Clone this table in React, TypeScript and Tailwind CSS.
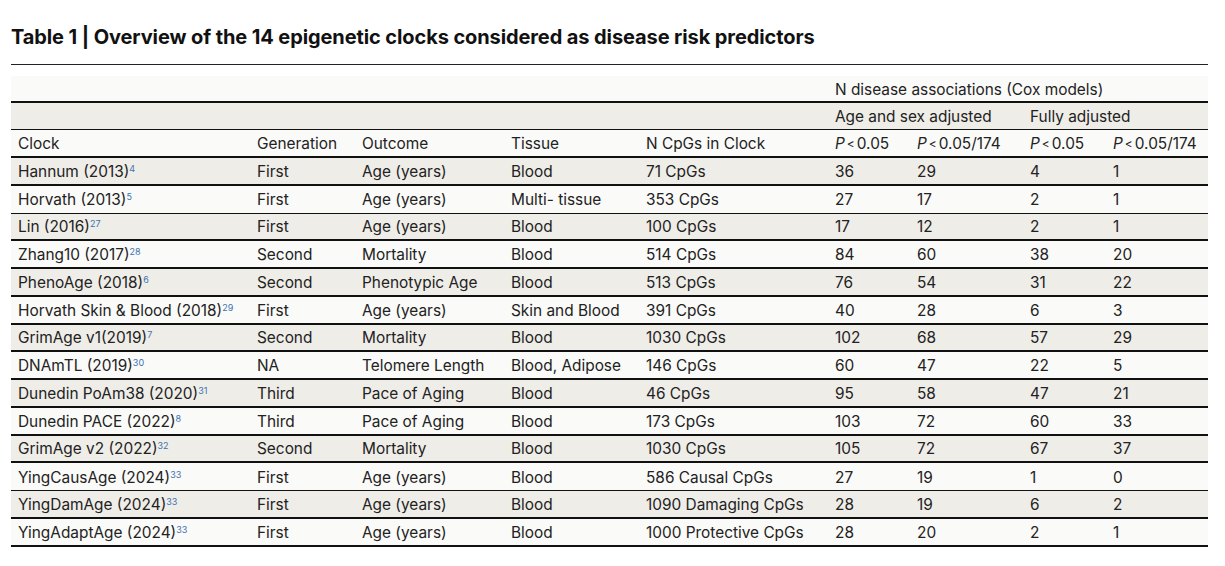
import React from "react";

const cols = "grid grid-cols-[239px_105px_149px_135px_189px_82px_113px_83px_102px]";

type Row = {
  name: string;
  sup: string;
  gen: string;
  out: string;
  tis: string;
  cpg: string;
  a: string;
  b: string;
  c: string;
  d: string;
  thin?: boolean;
};

const rows: Row[] = [
  { name: "Hannum (2013)", sup: "4", gen: "First", out: "Age (years)", tis: "Blood", cpg: "71 CpGs", a: "36", b: "29", c: "4", d: "1" },
  { name: "Horvath (2013)", sup: "5", gen: "First", out: "Age (years)", tis: "Multi- tissue", cpg: "353 CpGs", a: "27", b: "17", c: "2", d: "1", thin: true },
  { name: "Lin (2016)", sup: "27", gen: "First", out: "Age (years)", tis: "Blood", cpg: "100 CpGs", a: "17", b: "12", c: "2", d: "1" },
  { name: "Zhang10 (2017)", sup: "28", gen: "Second", out: "Mortality", tis: "Blood", cpg: "514 CpGs", a: "84", b: "60", c: "38", d: "20" },
  { name: "PhenoAge (2018)", sup: "6", gen: "Second", out: "Phenotypic Age", tis: "Blood", cpg: "513 CpGs", a: "76", b: "54", c: "31", d: "22" },
  { name: "Horvath Skin & Blood (2018)", sup: "29", gen: "First", out: "Age (years)", tis: "Skin and Blood", cpg: "391 CpGs", a: "40", b: "28", c: "6", d: "3" },
  { name: "GrimAge v1(2019)", sup: "7", gen: "Second", out: "Mortality", tis: "Blood", cpg: "1030 CpGs", a: "102", b: "68", c: "57", d: "29" },
  { name: "DNAmTL (2019)", sup: "30", gen: "NA", out: "Telomere Length", tis: "Blood, Adipose", cpg: "146 CpGs", a: "60", b: "47", c: "22", d: "5" },
  { name: "Dunedin PoAm38 (2020)", sup: "31", gen: "Third", out: "Pace of Aging", tis: "Blood", cpg: "46 CpGs", a: "95", b: "58", c: "47", d: "21" },
  { name: "Dunedin PACE (2022)", sup: "8", gen: "Third", out: "Pace of Aging", tis: "Blood", cpg: "173 CpGs", a: "103", b: "72", c: "60", d: "33" },
  { name: "GrimAge v2 (2022)", sup: "32", gen: "Second", out: "Mortality", tis: "Blood", cpg: "1030 CpGs", a: "105", b: "72", c: "67", d: "37" },
  { name: "YingCausAge (2024)", sup: "33", gen: "First", out: "Age (years)", tis: "Blood", cpg: "586 Causal CpGs", a: "27", b: "19", c: "1", d: "0", thin: true },
  { name: "YingDamAge (2024)", sup: "33", gen: "First", out: "Age (years)", tis: "Blood", cpg: "1090 Damaging CpGs", a: "28", b: "19", c: "6", d: "2" },
  { name: "YingAdaptAge (2024)", sup: "33", gen: "First", out: "Age (years)", tis: "Blood", cpg: "1000 Protective CpGs", a: "28", b: "20", c: "2", d: "1" },
];

const P = ({ suffix }: { suffix: string }) => (
  <span>
    <i>P</i>
    <span className="text-[12px] mx-[2px] relative top-[-1px]">&lt;</span>
    {suffix}
  </span>
);

const Cell = ({ children }: { children?: React.ReactNode }) => (
  <div className="flex items-center whitespace-nowrap pl-[7px] pt-[2px]">{children}</div>
);

export default function App() {
  return (
    <div
      className="w-[1225px] h-[566px] bg-white text-[#222] overflow-hidden"
      style={{ fontFamily: "Inter, 'Liberation Sans', sans-serif" }}
    >
      <div className="pl-[11px] pt-[25px] h-[50px] text-[20px] leading-[24px] font-bold text-[#111] tracking-[-0.1px]">
        Table 1 | Overview of the 14 epigenetic clocks considered as disease risk predictors
      </div>
      <div className="ml-[11px] w-[1197px] mt-[14px] border-t border-[#222]" />
      <div className="ml-[11px] w-[1197px] mt-[11px] text-[15.4px] leading-[18px]">
        {/* header row 1 */}
        <div className={`${cols} h-[27px] bg-[#fafaf8] border-b-2 border-[#111]`}>
          <div className="col-span-5" />
          <div className="col-span-4 flex items-center pl-[7px] pt-[2px] whitespace-nowrap">N disease associations (Cox models)</div>
        </div>
        {/* header row 2 */}
        <div className={`${cols} h-[27px] bg-[#efede8] border-b border-[#111]`}>
          <div className="col-span-5" />
          <div className="col-span-2 flex items-center pl-[7px] pt-[2px] whitespace-nowrap">Age and sex adjusted</div>
          <div className="col-span-2 flex items-center pl-[7px] pt-[2px] whitespace-nowrap">Fully adjusted</div>
        </div>
        {/* header row 3 */}
        <div className={`${cols} h-[28px] bg-[#fafaf8] border-b-2 border-[#111]`}>
          <Cell>Clock</Cell>
          <Cell>Generation</Cell>
          <Cell>Outcome</Cell>
          <Cell>Tissue</Cell>
          <Cell>N CpGs in Clock</Cell>
          <Cell><P suffix="0.05" /></Cell>
          <Cell><P suffix="0.05/174" /></Cell>
          <Cell><P suffix="0.05" /></Cell>
          <Cell><P suffix="0.05/174" /></Cell>
        </div>
        {rows.map((r, i) => (
          <div
            key={r.name}
            className={`${cols} h-[27.75px] ${i % 2 === 0 ? "bg-[#efede8]" : "bg-[#fafaf8]"} ${r.thin ? "border-b" : "border-b-2"} border-[#111]`}
          >
            <Cell>
              <span className="inline-flex items-start">
                <span>{r.name}</span>
                <span className="text-[9px] leading-[9px] text-[#3b73b0] mt-[1px]">{r.sup}</span>
              </span>
            </Cell>
            <Cell>{r.gen}</Cell>
            <Cell>{r.out}</Cell>
            <Cell>{r.tis}</Cell>
            <Cell>{r.cpg}</Cell>
            <Cell>{r.a}</Cell>
            <Cell>{r.b}</Cell>
            <Cell>{r.c}</Cell>
            <Cell>{r.d}</Cell>
          </div>
        ))}
      </div>
    </div>
  );
}
